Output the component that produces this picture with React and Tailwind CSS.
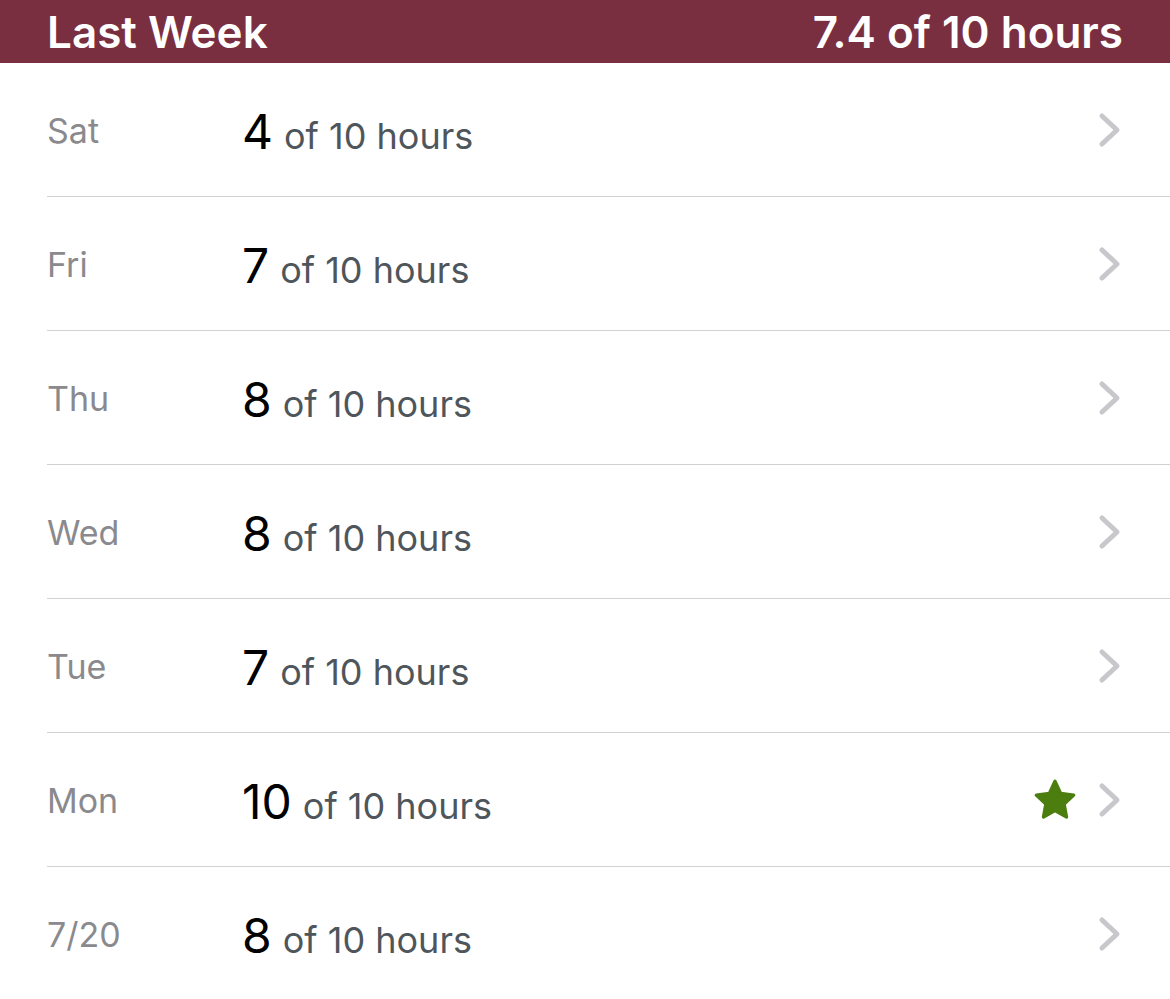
import React from "react";

const days = [
  { day: "Sat", hours: 4 },
  { day: "Fri", hours: 7 },
  { day: "Thu", hours: 8 },
  { day: "Wed", hours: 8 },
  { day: "Tue", hours: 7 },
  { day: "Mon", hours: 10, star: true },
  { day: "7/20", hours: 8 },
];

const Chevron = () => (
  <svg width="24" height="36" viewBox="0 0 24 36" fill="none" aria-hidden="true">
    <path d="M4 4 L19 18 L4 32" stroke="#c7c7cc" strokeWidth="5" strokeLinecap="round" strokeLinejoin="round" />
  </svg>
);

const Star = () => (
  <svg width="46" height="44" viewBox="0 0 24 24" aria-hidden="true">
    <path
      d="M12 1.8l3.1 6.6 7.1.9-5.2 4.9 1.3 7.1L12 17.8l-6.3 3.5 1.3-7.1-5.2-4.9 7.1-.9z"
      fill="#4b7d0f"
      stroke="#4b7d0f"
      strokeWidth="1.8"
      strokeLinejoin="round"
    />
  </svg>
);

const Row = ({ day, hours, star, last }) => (
  <div className="pl-[47px]">
    <div className={`flex items-center h-[134px] pr-[48px] ${last ? "" : "border-b border-[#d1d1d6]"}`}>
      <div className="w-[195px] text-[34px] text-[#8a8a8e] mt-[1px]">{day}</div>
      <div className="flex-1 flex items-baseline mt-[4px]">
        <span className="text-[48px] text-black mr-[11px]">{hours}</span>
        <span className="text-[36px] text-[#4f565b]">of 10 hours</span>
      </div>
      {star && (
        <div className="mr-[20px]">
          <Star />
        </div>
      )}
      <Chevron />
    </div>
  </div>
);

export default function App() {
  return (
    <div className="w-[1170px] h-[999px] overflow-hidden bg-white" style={{ fontFamily: "Inter, 'Noto Sans', sans-serif" }}>
      <div className="h-[63px] bg-[#7a2f41] flex items-center justify-between px-[47px] text-white text-[44px] font-semibold">
        <span>Last Week</span>
        <span>7.4 of 10 hours</span>
      </div>
      {days.map((d, i) => (
        <Row key={d.day} {...d} last={i === days.length - 1} />
      ))}
    </div>
  );
}
